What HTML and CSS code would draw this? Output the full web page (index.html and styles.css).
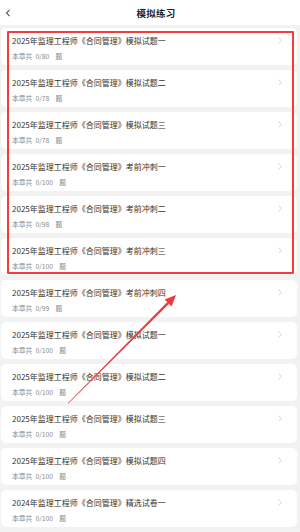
FILE: index.html
```html
<!DOCTYPE html>
<html lang="zh-CN">
<head>
<meta charset="utf-8">
<title>模拟练习</title>
<link rel="stylesheet" href="styles.css">
</head>
<body>
<div class="page">
  <header class="header">
    <svg class="back" width="6" height="8" viewBox="0 0 6 8"><polyline points="4.5,0.8 1.5,4 4.5,7.2" fill="none" stroke="#555" stroke-width="1.1"/></svg>
    <div class="title">模拟练习</div>
  </header>
  <main class="list">
    <div class="card"><div class="card-body"><div class="name">2025年监理工程师《合同管理》模拟试题一</div><div class="meta">本章共<span class="count">0/80</span><span class="unit">题</span></div></div><svg class="chev" width="4" height="7" viewBox="0 0 4 7"><polyline points="0.6,0.6 3.3,3.5 0.6,6.4" fill="none" stroke="#c8c8c8" stroke-width="0.8"/></svg></div>
    <div class="card"><div class="card-body"><div class="name">2025年监理工程师《合同管理》模拟试题二</div><div class="meta">本章共<span class="count">0/78</span><span class="unit">题</span></div></div><svg class="chev" width="4" height="7" viewBox="0 0 4 7"><polyline points="0.6,0.6 3.3,3.5 0.6,6.4" fill="none" stroke="#c8c8c8" stroke-width="0.8"/></svg></div>
    <div class="card"><div class="card-body"><div class="name">2025年监理工程师《合同管理》模拟试题三</div><div class="meta">本章共<span class="count">0/78</span><span class="unit">题</span></div></div><svg class="chev" width="4" height="7" viewBox="0 0 4 7"><polyline points="0.6,0.6 3.3,3.5 0.6,6.4" fill="none" stroke="#c8c8c8" stroke-width="0.8"/></svg></div>
    <div class="card"><div class="card-body"><div class="name">2025年监理工程师《合同管理》考前冲刺一</div><div class="meta">本章共<span class="count">0/100</span><span class="unit">题</span></div></div><svg class="chev" width="4" height="7" viewBox="0 0 4 7"><polyline points="0.6,0.6 3.3,3.5 0.6,6.4" fill="none" stroke="#c8c8c8" stroke-width="0.8"/></svg></div>
    <div class="card"><div class="card-body"><div class="name">2025年监理工程师《合同管理》考前冲刺二</div><div class="meta">本章共<span class="count">0/98</span><span class="unit">题</span></div></div><svg class="chev" width="4" height="7" viewBox="0 0 4 7"><polyline points="0.6,0.6 3.3,3.5 0.6,6.4" fill="none" stroke="#c8c8c8" stroke-width="0.8"/></svg></div>
    <div class="card"><div class="card-body"><div class="name">2025年监理工程师《合同管理》考前冲刺三</div><div class="meta">本章共<span class="count">0/100</span><span class="unit">题</span></div></div><svg class="chev" width="4" height="7" viewBox="0 0 4 7"><polyline points="0.6,0.6 3.3,3.5 0.6,6.4" fill="none" stroke="#c8c8c8" stroke-width="0.8"/></svg></div>
    <div class="card"><div class="card-body"><div class="name">2025年监理工程师《合同管理》考前冲刺四</div><div class="meta">本章共<span class="count">0/99</span><span class="unit">题</span></div></div><svg class="chev" width="4" height="7" viewBox="0 0 4 7"><polyline points="0.6,0.6 3.3,3.5 0.6,6.4" fill="none" stroke="#c8c8c8" stroke-width="0.8"/></svg></div>
    <div class="card"><div class="card-body"><div class="name">2025年监理工程师《合同管理》模拟试题一</div><div class="meta">本章共<span class="count">0/100</span><span class="unit">题</span></div></div><svg class="chev" width="4" height="7" viewBox="0 0 4 7"><polyline points="0.6,0.6 3.3,3.5 0.6,6.4" fill="none" stroke="#c8c8c8" stroke-width="0.8"/></svg></div>
    <div class="card"><div class="card-body"><div class="name">2025年监理工程师《合同管理》模拟试题二</div><div class="meta">本章共<span class="count">0/100</span><span class="unit">题</span></div></div><svg class="chev" width="4" height="7" viewBox="0 0 4 7"><polyline points="0.6,0.6 3.3,3.5 0.6,6.4" fill="none" stroke="#c8c8c8" stroke-width="0.8"/></svg></div>
    <div class="card"><div class="card-body"><div class="name">2025年监理工程师《合同管理》模拟试题三</div><div class="meta">本章共<span class="count">0/100</span><span class="unit">题</span></div></div><svg class="chev" width="4" height="7" viewBox="0 0 4 7"><polyline points="0.6,0.6 3.3,3.5 0.6,6.4" fill="none" stroke="#c8c8c8" stroke-width="0.8"/></svg></div>
    <div class="card"><div class="card-body"><div class="name">2025年监理工程师《合同管理》模拟试题四</div><div class="meta">本章共<span class="count">0/100</span><span class="unit">题</span></div></div><svg class="chev" width="4" height="7" viewBox="0 0 4 7"><polyline points="0.6,0.6 3.3,3.5 0.6,6.4" fill="none" stroke="#c8c8c8" stroke-width="0.8"/></svg></div>
    <div class="card"><div class="card-body"><div class="name">2024年监理工程师《合同管理》精选试卷一</div><div class="meta">本章共<span class="count">0/100</span><span class="unit">题</span></div></div><svg class="chev" width="4" height="7" viewBox="0 0 4 7"><polyline points="0.6,0.6 3.3,3.5 0.6,6.4" fill="none" stroke="#c8c8c8" stroke-width="0.8"/></svg></div>
  </main>
  <div class="highlight"></div>
  <svg class="arrow" width="300" height="532" viewBox="0 0 300 532">
    <polygon points="67.8,403.2 68.2,403.8 169.1,303.7 167.3,301.9" fill="#f03a3a"/>
    <polygon points="176,295 164.6,299.4 171.6,306.4" fill="#f03a3a"/>
  </svg>
</div>
</body>
</html>
```
FILE: styles.css
```css
* { box-sizing: border-box; }
html, body { margin: 0; padding: 0; }
body {
  background: #f2f2f2;
  font-family: "Noto Sans CJK SC", "Noto Sans", sans-serif;
  width: 300px;
  height: 532px;
  overflow: hidden;
}
.page { position: relative; width: 300px; height: 532px; }
.header {
  position: relative;
  height: 25px;
  background: #ffffff;
  display: flex;
  align-items: center;
  justify-content: center;
  padding-left: 12px;
}
.back { position: absolute; left: 5px; top: 9px; }
.title {
  font-size: 9.5px;
  font-weight: 600;
  color: #222;
  letter-spacing: 0.2px;
  line-height: 12px;
}
.list {
  display: flex;
  flex-direction: column;
  gap: 5px;
  padding: 3px 3px 0 1px;
}
.card {
  background: #ffffff;
  border-radius: 5px;
  height: 37px;
  flex: none;
  display: flex;
  align-items: flex-start;
  justify-content: space-between;
  padding: 7px 15px 0 11px;
}
.name {
  font-size: 8px;
  line-height: 11px;
  color: #333;
  white-space: nowrap;
}
.meta {
  margin-top: 5px;
  font-size: 6.8px;
  line-height: 10px;
  color: #8a8a8a;
  white-space: nowrap;
}
.count { margin-left: 3px; }
.unit { margin-left: 6px; }
.chev { margin-top: 2px; }
.highlight {
  position: absolute;
  left: 7px;
  top: 31px;
  width: 287px;
  height: 243px;
  border: 2px solid #f43c3c;
  border-radius: 1px;
}
.arrow { position: absolute; left: 0; top: 0; pointer-events: none; }
```
